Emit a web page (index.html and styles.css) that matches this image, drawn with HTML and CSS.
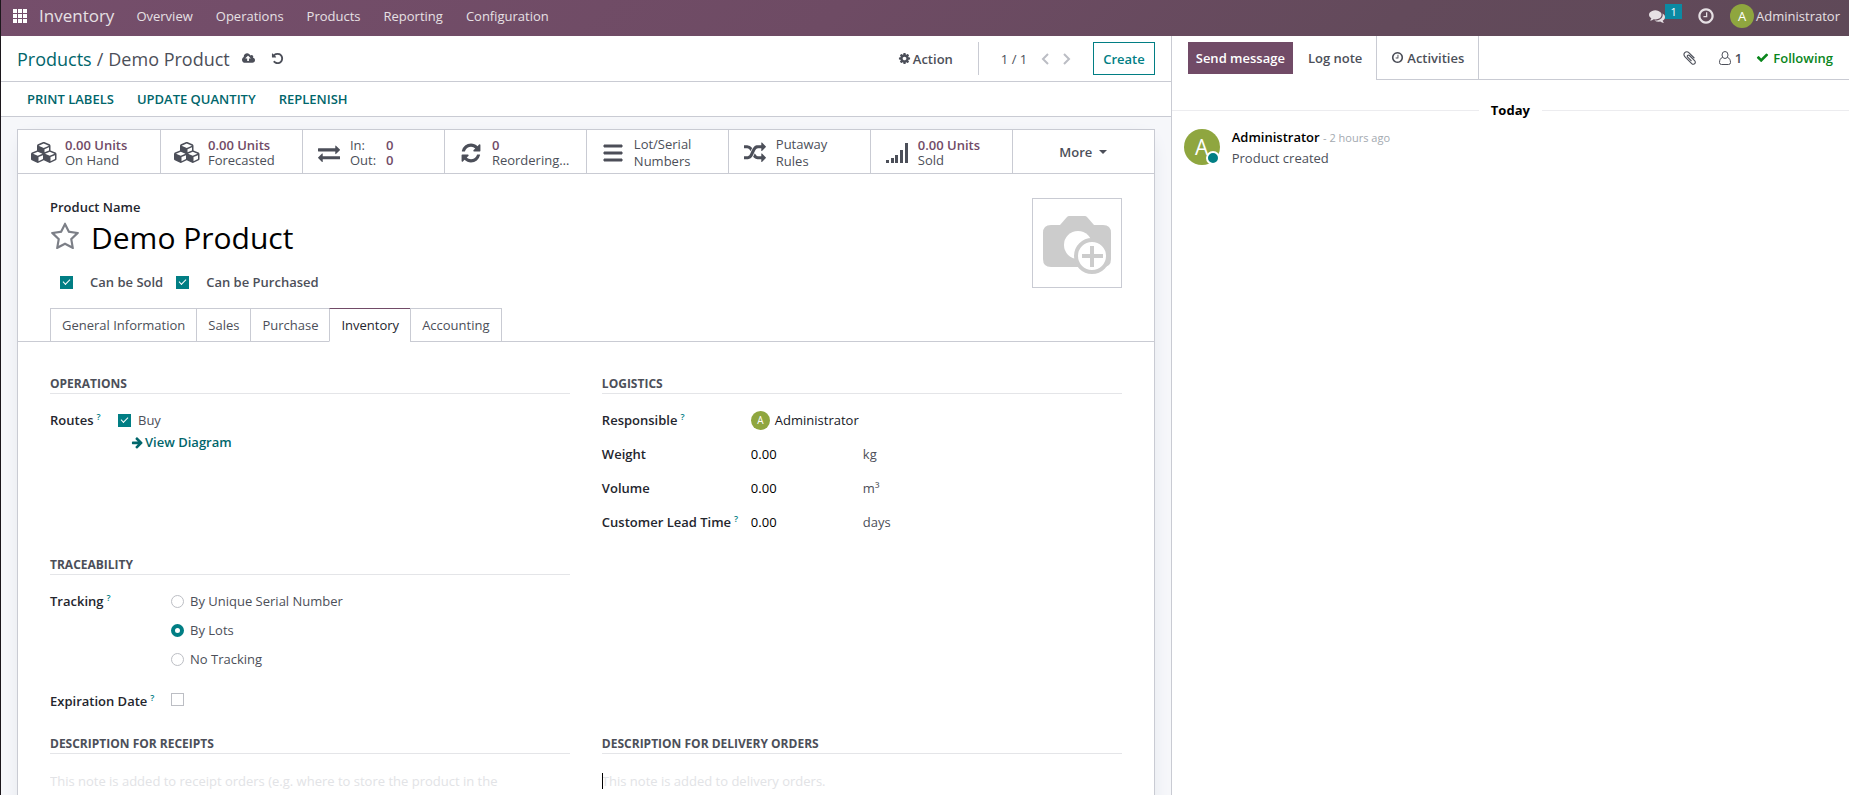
FILE: index.html
```html
<!DOCTYPE html>
<html lang="en">
<head>
<meta charset="utf-8">
<title>Inventory - Demo Product</title>
<link rel="stylesheet" href="styles.css">
</head>
<body>
<svg class="sprite" aria-hidden="true">
  <symbol id="i-cubes" viewBox="0 0 2304 1792"><path d="M640 1632l384-192v-314l-384 164v342zm-64-454l404-173-404-173-404 173zm1088 454l384-192v-314l-384 164v342zm-64-454l404-173-404-173-404 173zm-448-293l384-165v-266l-384 164v267zm-64-379l441-189-441-189-441 189zm1088 518v416q0 36-19 67t-52 47l-448 224q-25 14-57 14t-57-14l-448-224q-4-2-7-4-2 2-7 4l-448 224q-25 14-57 14t-57-14l-448-224q-33-16-52-47t-19-67v-416q0-38 21.500-70t56.500-48l434-186v-400q0-38 21.500-70t56.500-48l448-192q23-10 50-10t50 10l448 192q35 16 56.500 48t21.500 70v400l434 186q36 16 57 48t21 70z"/></symbol>
  <symbol id="i-clock" viewBox="0 0 1792 1792"><path d="M1024 544v448q0 14-9 23t-23 9h-320q-14 0-23-9t-9-23v-64q0-14 9-23t23-9h224v-352q0-14 9-23t23-9h64q14 0 23 9t9 23zm416 352q0-148-73-273t-198-198-273-73-273 73-198 198-73 273 73 273 198 198 273 73 273-73 198-198 73-273zm224 0q0 209-103 385.500t-279.500 279.500-385.500 103-385.500-103-279.500-279.500-103-385.500 103-385.500 279.500-279.500 385.500-103 385.500 103 279.500 279.500 103 385.500z"/></symbol>
</svg>

<header class="navbar">
  <button class="icon-btn apps" aria-label="Apps">
    <svg width="14" height="14" viewBox="0 0 14 14"><path d="M0 0h4v4H0zM5 0h4v4H5zM10 0h4v4h-4zM0 5h4v4H0zM5 5h4v4H5zM10 5h4v4h-4zM0 10h4v4H0zM5 10h4v4H5zM10 10h4v4h-4z"/></svg>
  </button>
  <a class="brand" href="#">Inventory</a>
  <nav class="menu">
    <a href="#">Overview</a>
    <a href="#">Operations</a>
    <a href="#">Products</a>
    <a href="#">Reporting</a>
    <a href="#">Configuration</a>
  </nav>
  <div class="systray">
    <button class="icon-btn chat" aria-label="Messages">
      <svg width="16" height="16" viewBox="0 0 1792 1792"><path d="M1408 768q0 139-94 257t-256.500 186.500-353.500 68.500q-86 0-176-16-124 88-278 128-36 9-86 16h-3q-11 0-20.500-8t-11.500-21q-1-3-1-6.500t.5-6.500 2-6l2.500-5 3.500-5.500 4-5 4.500-5 4-4.500q5-6 23-25t26-29.500 22.500-29 25-38.500 20.500-44q-124-72-195-177t-71-224q0-139 94-257t256.500-186.500 353.500-68.500 353.500 68.500 256.500 186.500 94 257zm384 256q0 120-71 224.500t-195 176.500q10 24 20.500 44t25 38.500 22.500 29 26 29.500 23 25q1 1 4 4.500t4.500 5 4 5 3.500 5.500l2.500 5 2 6 .5 6.500-1 6.500q-3 14-13 22t-22 7q-50-7-86-16-154-40-278-128-90 16-176 16-271 0-472-132 58 4 88 4 161 0 309-45t264-129q125-92 192-212t67-254q0-77-23-152 129 71 204 178t75 230z"/></svg>
      <span class="badge">1</span>
    </button>
    <button class="icon-btn" aria-label="Activities"><svg width="18" height="18"><use href="#i-clock"/></svg></button>
    <button class="user"><span class="avatar avatar-md">A</span>Administrator</button>
  </div>
</header>

<main class="content">
  <section class="form-side">
    <div class="control-panel">
      <div class="breadcrumb"><a href="#">Products</a><span class="sep">/</span><span>Demo Product</span></div>
      <button class="icon-btn save" aria-label="Save">
        <svg width="13" height="13" viewBox="0 0 1920 1792"><path d="M1280 864q0-14-9-23l-352-352q-9-9-23-9t-23 9l-351 351q-10 12-10 24 0 14 9 23t23 9h224v352q0 13 9.500 22.500t22.500 9.500h192q13 0 22.500-9.500t9.500-22.500v-352h224q13 0 22.500-9.500t9.500-22.500zm640 288q0 159-112.500 271.500t-271.500 112.500h-1088q-185 0-316.500-131.500t-131.500-316.500q0-130 70-240t188-165q-2-30-2-43 0-212 150-362t362-150q156 0 285.500 87t188.500 231q71-62 166-62 106 0 181 75t75 181q0 76-41 138 130 31 213.500 135.500t83.500 238.500z"/></svg>
      </button>
      <button class="icon-btn" aria-label="Discard">
        <svg width="13" height="13" viewBox="0 0 1792 1792"><path d="M1664 896q0 156-61 298t-164 245-245 164-298 61q-172 0-327-72.500t-264-204.500q-7-10-6.500-22.500t8.500-20.500l137-138q10-9 25-9 16 2 23 12 73 95 179 147t225 52q104 0 198.500-40.500t163.500-109.500 109.500-163.500 40.500-198.500-40.500-198.500-109.500-163.500-163.500-109.500-198.500-40.500q-98 0-188 35.500t-160 101.500l137 138q31 30 14 69-17 40-59 40h-448q-26 0-45-19t-19-45v-448q0-42 40-59 39-17 69 14l130 129q107-101 244.500-156.500t284.500-55.500q156 0 298 61t245 164 164 245 61 298z"/></svg>
      </button>
      <button class="action">
        <svg width="13" height="13" viewBox="0 0 1792 1792"><path d="M1152 896q0-106-75-181t-181-75-181 75-75 181 75 181 181 75 181-75 75-181zm512-109v222q0 12-8 23t-20 13l-185 28q-19 54-39 91 35 50 107 138 10 12 10 25t-9 23q-27 37-99 108t-94 71q-12 0-26-9l-138-108q-44 23-91 38-16 136-29 186-7 28-36 28h-222q-14 0-24.500-8.500t-11.500-21.500l-28-184q-49-16-90-37l-141 107q-10 9-25 9-14 0-25-11-126-114-165-168-7-10-7-23 0-12 8-23 15-21 51-66.500t54-70.500q-27-50-41-99l-183-27q-13-2-21-12.500t-8-23.500v-222q0-12 8-23t19-13l186-28q14-46 39-92-40-57-107-138-10-12-10-24 0-10 9-23 26-36 98.500-107.500t94.500-71.500q13 0 26 10l138 107q44-23 91-38 16-136 29-186 7-28 36-28h222q14 0 24.500 8.500t11.500 21.500l28 184q49 16 90 37l142-107q9-9 24-9 13 0 25 10 129 119 165 170 7 8 7 22 0 12-8 23-15 21-51 66.500t-54 70.500q26 50 41 98l183 28q13 2 21 12.500t8 23.500z"/></svg>Action
      </button>
      <div class="pager">
        <span>1 / 1</span>
        <button class="icon-btn" aria-label="Previous"><svg width="8" height="12" viewBox="0 0 8 12"><path class="chev" d="M7 1L2 6l5 5"/></svg></button>
        <button class="icon-btn" aria-label="Next"><svg width="8" height="12" viewBox="0 0 8 12"><path class="chev" d="M1 1l5 5-5 5"/></svg></button>
      </div>
      <button class="create">Create</button>
    </div>

    <div class="statusbar">
      <button>PRINT LABELS</button>
      <button>UPDATE QUANTITY</button>
      <button>REPLENISH</button>
    </div>

    <div class="sheet-area">
      <div class="sheet">
        <div class="stats">
          <button class="stat"><span class="stat-icon"><svg width="27" height="21"><use href="#i-cubes"/></svg></span><span class="stat-text"><b>0.00 Units</b><span>On Hand</span></span></button>
          <button class="stat"><span class="stat-icon"><svg width="27" height="21"><use href="#i-cubes"/></svg></span><span class="stat-text"><b>0.00 Units</b><span>Forecasted</span></span></button>
          <button class="stat"><span class="stat-icon"><svg width="22" height="22" viewBox="0 0 1792 1792"><path d="M1792 1184v192q0 13-9.500 22.500t-22.500 9.500h-1376v192q0 13-9.500 22.500t-22.500 9.500q-12 0-24-10l-319-320q-9-9-9-22 0-14 9-23l320-320q9-9 23-9 13 0 22.500 9.500t9.500 22.500v192h1376q13 0 22.500 9.500t9.500 22.500zm0-544q0 14-9 23l-320 320q-9 9-23 9-13 0-22.500-9.500t-9.500-22.500v-192h-1376q-13 0-22.500-9.500t-9.500-22.500v-192q0-13 9.500-22.500t22.500-9.500h1376v-192q0-14 9-23t23-9q12 0 24 10l319 319q9 9 9 23z"/></svg></span><span class="stat-text in-out"><span>In:</span><b>0</b><span>Out:</span><b>0</b></span></button>
          <button class="stat"><span class="stat-icon"><svg width="22" height="22" viewBox="0 0 1792 1792"><path d="M1639 1056q0 5-1 7-64 268-268 434.500t-478 166.500q-146 0-282.500-55t-243.500-157l-129 129q-19 19-45 19t-45-19-19-45v-448q0-26 19-45t45-19h448q26 0 45 19t19 45-19 45l-137 137q71 66 161 102t187 36q134 0 250-65t186-179q11-17 53-117 8-23 30-23h192q13 0 22.500 9.500t9.500 22.500zm25-800v448q0 26-19 45t-45 19h-448q-26 0-45-19t-19-45 19-45l138-138q-148-137-349-137-134 0-250 65t-186 179q-11 17-53 117-8 23-30 23h-199q-13 0-22.500-9.500t-9.500-22.500v-7q65-268 270-434.500t480-166.500q146 0 284 55.500t245 156.500l130-129q19-19 45-19t45 19 19 45z"/></svg></span><span class="stat-text"><b>0</b><span>Reordering…</span></span></button>
          <button class="stat"><span class="stat-icon"><svg width="20" height="18" viewBox="0 0 20 18"><path d="M1 1h18v2H1zM1 8h18v2H1zM1 15h18v2H1z" stroke="currentColor" stroke-width="1" stroke-linejoin="round"/></svg></span><span class="stat-text loose"><span>Lot/Serial</span><span>Numbers</span></span></button>
          <button class="stat"><span class="stat-icon"><svg width="22" height="22" viewBox="0 0 1792 1792"><path d="M666 481q-60 92-137 273-22-45-37-72.500t-40.500-63.500-51-56.500-63-35-81.500-14.500h-224q-14 0-23-9t-9-23v-192q0-14 9-23t23-9h224q250 0 410 225zm1126 799q0 14-9 23l-320 320q-9 9-23 9-13 0-22.500-9.500t-9.500-22.500v-192q-32 0-85 .5t-81 1-73-1-71-5-64-10.500-63-18.500-58-28.500-59-40-55-53.500-56-69.500q59-93 136-273 22 45 37 72.500t40.500 63.500 51 56.500 63 35 81.500 14.500h256v-192q0-14 9-23t23-9q12 0 24 10l319 319q9 9 9 23zm0-896q0 14-9 23l-320 320q-9 9-23 9-13 0-22.500-9.500t-9.500-22.500v-192h-256q-48 0-87 15t-69 45-51 61.500-45 77.500q-32 62-78 171-29 66-49.500 111t-54 105-64 100-74 83-90 68.500-106.500 42-128 16.500h-224q-14 0-23-9t-9-23v-192q0-14 9-23t23-9h224q48 0 87-15t69-45 51-61.500 45-77.500q32-62 78-171 29-66 49.500-111t54-105 64-100 74-83 90-68.500 106.500-42 128-16.500h256v-192q0-14 9-23t23-9q12 0 24 10l319 319q9 9 9 23z"/></svg></span><span class="stat-text loose"><span>Putaway</span><span>Rules</span></span></button>
          <button class="stat"><span class="stat-icon"><svg width="22" height="20" viewBox="0 0 22 20"><path d="M0 17h3v3H0zM5 15h3v5H5zM9 12h3v8H9zM14 7h3v13h-3zM19 0h3v20h-3z"/></svg></span><span class="stat-text"><b>0.00 Units</b><span>Sold</span></span></button>
          <button class="stat more">More<svg width="8" height="4" viewBox="0 0 8 4"><path d="M0 0h8L4 4z"/></svg></button>
        </div>

        <div class="title-row">
          <div class="title">
            <label class="field-label" for="name">Product Name</label>
            <div class="name-row">
              <button class="icon-btn star" aria-label="Favorite"><svg width="30" height="30" viewBox="0 0 1792 1792"><path d="M1201 1004l306-297-422-62-189-382-189 382-422 62 306 297-73 421 378-199 377 199zm527-357q0 22-26 48l-363 354 86 500q1 7 1 20 0 50-41 50-19 0-40-12l-449-236-449 236q-22 12-40 12-21 0-31.500-14.500t-10.500-35.500q0-6 2-20l86-500-364-354q-25-27-25-48 0-37 56-46l502-73 225-455q19-41 49-41t49 41l225 455 502 73q56 9 56 46z"/></svg></button>
              <input id="name" class="name" type="text" value="Demo Product">
            </div>
            <div class="flags">
              <label><input class="check" type="checkbox" checked>Can be Sold</label>
              <label><input class="check" type="checkbox" checked>Can be Purchased</label>
            </div>
          </div>
          <div class="photo">
            <svg viewBox="0 0 88 88" role="img" aria-label="Product image"><path fill="#ccc" d="M18 26h9l7-8q1-1 2-1h16q1 0 2 1l7 8h9q8 0 8 8v26q0 8-8 8H18q-8 0-8-8V34q0-8 8-8z"/><circle cx="45" cy="46" r="14" fill="#fff"/><circle cx="59" cy="57" r="16" fill="#fff" stroke="#ccc" stroke-width="4"/><path d="M59 47v21M49 57h21" stroke="#ccc" stroke-width="4"/></svg>
          </div>
        </div>

        <nav class="tabs">
          <a href="#">General Information</a>
          <a href="#">Sales</a>
          <a href="#">Purchase</a>
          <a href="#" class="active">Inventory</a>
          <a href="#">Accounting</a>
        </nav>

        <div class="groups">
          <section class="group top">
            <h2>OPERATIONS</h2>
            <div class="row routes">
              <span class="field-label">Routes<sup>?</sup></span>
              <div>
                <label class="route"><input class="check" type="checkbox" checked>Buy</label>
                <a class="diagram" href="#"><svg width="12" height="13" viewBox="0 0 1664 1792"><path d="M1600 960q0 54-37 91l-651 651q-39 37-91 37-51 0-90-37l-75-75q-38-38-38-91t38-91l293-293h-704q-52 0-84.500-37.500t-32.500-90.500v-128q0-53 32.500-90.500t84.500-37.500h704l-293-294q-38-36-38-90t38-90l75-75q38-38 90-38 53 0 91 38l651 651q37 35 37 90z"/></svg>View Diagram</a>
              </div>
            </div>
          </section>
          <section class="group top">
            <h2>LOGISTICS</h2>
            <div class="row wide"><span class="field-label">Responsible<sup>?</sup></span><span class="responsible"><span class="avatar avatar-sm">A</span>Administrator</span></div>
            <div class="row wide"><label class="field-label" for="weight">Weight</label><input id="weight" class="num" value="0.00"><span class="unit">kg</span></div>
            <div class="row wide"><label class="field-label" for="volume">Volume</label><input id="volume" class="num" value="0.00"><span class="unit">m³</span></div>
            <div class="row wide"><label class="field-label" for="lead">Customer Lead Time<sup>?</sup></label><input id="lead" class="num" value="0.00"><span class="unit">days</span></div>
          </section>
          <section class="group trace">
            <h2>TRACEABILITY</h2>
            <div class="row tracking">
              <span class="field-label">Tracking<sup>?</sup></span>
              <div class="radios">
                <label><input class="radio" type="radio" name="tracking">By Unique Serial Number</label>
                <label><input class="radio" type="radio" name="tracking" checked>By Lots</label>
                <label><input class="radio" type="radio" name="tracking">No Tracking</label>
              </div>
            </div>
            <div class="row"><label class="field-label" for="exp">Expiration Date<sup>?</sup></label><input id="exp" class="check" type="checkbox"></div>
          </section>
          <section class="group notes">
            <h2><label for="receipts">DESCRIPTION FOR RECEIPTS</label></h2>
            <textarea id="receipts" rows="1" placeholder="This note is added to receipt orders (e.g. where to store the product in the"></textarea>
          </section>
          <section class="group notes focused">
            <h2><label for="delivery">DESCRIPTION FOR DELIVERY ORDERS</label></h2>
            <textarea id="delivery" rows="1" placeholder="This note is added to delivery orders."></textarea>
          </section>
        </div>
      </div>
    </div>
  </section>

  <aside class="chatter">
    <div class="chatter-bar">
      <div class="compose">
        <button class="send">Send message</button>
        <button class="log">Log note</button>
      </div>
      <button class="activities"><svg width="13" height="13"><use href="#i-clock"/></svg>Activities</button>
      <div class="chatter-right">
        <button class="icon-btn clip" aria-label="Attachments"><svg width="16" height="16" viewBox="0 0 1792 1792"><path transform="translate(70 0)" d="M1596 1385q0 117-79 196t-196 79q-135 0-235-100l-777-776q-113-115-113-271 0-159 110-270t269-111q158 0 273 113l605 606q10 10 10 22 0 16-30.500 46.500t-46.500 30.500q-13 0-23-10l-606-607q-79-77-181-77-106 0-179 75t-73 181q0 105 76 181l776 777q63 63 145 63 64 0 106-42t42-106q0-82-63-145l-581-581q-26-24-60-24-29 0-48 19t-19 48q0 32 25 59l410 410q10 10 10 22 0 16-31 47t-47 31q-12 0-22-10l-410-410q-63-61-63-149 0-82 57-139t139-57q88 0 149 63l581 581q100 98 100 235z"/></svg></button>
        <button class="followers"><svg width="12" height="14" viewBox="0 0 12 14"><g fill="none" stroke="currentColor"><ellipse cx="6" cy="4" rx="3" ry="3.500"/><path d="M3.500 6.500C1.500 7 .5 9 .5 11.500q0 2 2 2h7q2 0 2-2C11.500 9 10.500 7 8.500 6.500"/></g></svg>1</button>
        <button class="following"><svg width="13" height="13" viewBox="0 0 1792 1792"><path d="M1671 566q0 40-28 68l-724 724-136 136q-28 28-68 28t-68-28l-136-136-362-362q-28-28-28-68t28-68l136-136q28-28 68-28t68 28l294 295 656-657q28-28 68-28t68 28l136 136q28 28 28 68z"/></svg>Following</button>
      </div>
    </div>
    <div class="day">Today</div>
    <article class="message">
      <span class="avatar avatar-lg">A<i class="presence"></i></span>
      <div>
        <div class="author"><b>Administrator</b> <time>- 2 hours ago</time></div>
        <p>Product created</p>
      </div>
    </article>
  </aside>
</main>
</body>
</html>
```

FILE: styles.css
```css
* { box-sizing: border-box; }

:root {
  --teal: #017e84;
  --link: #01666b;
  --plum: #714b67;
  --text: #4c4f59;
  --dark: #24262e;
  --line: #c9cbd3;
  --soft: #e4e5e8;
  --green: #8fa63f;
  --medium: 600;
}

body {
  display: flex;
  flex-direction: column;
  height: 100vh;
  margin: 0;
  overflow: hidden;
  border-left: 1px solid #1c171c;
  background: #fff;
  color: var(--text);
  font: 13px/16px "Open Sans", "Noto Sans", sans-serif;
}

button, input, textarea {
  margin: 0;
  padding: 0;
  border: 0;
  background: none;
  color: inherit;
  font: inherit;
}

a { color: inherit; text-decoration: none; }
svg { display: block; flex: none; fill: currentColor; }
.sprite { position: absolute; width: 0; height: 0; }
.icon-btn { display: flex; align-items: center; }
.chev { fill: none; stroke: #bbbdc4; stroke-width: 2; }

.avatar {
  display: flex;
  flex: none;
  align-items: center;
  justify-content: center;
  border-radius: 50%;
  background: var(--green);
  color: #fff;
}
.avatar-sm { width: 19px; height: 19px; font-size: 10px; }
.avatar-md { width: 24px; height: 24px; font-size: 13px; }
.avatar-lg { position: relative; width: 36px; height: 36px; font-size: 21px; }

/* Top bar */
.navbar {
  display: flex;
  flex: none;
  align-items: center;
  height: 36px;
  padding: 0 9px 4px 12px;
  background: linear-gradient(135deg, #754e6b 0%, #6e4b64 45%, #634a5b 75%, #5f4958 100%);
  color: #e6e0e4;
}
.apps { color: #fff; }
.brand { margin-left: 12px; font-size: 17px; line-height: 24px; }
.menu { display: flex; gap: 23px; margin-left: 22px; }
.systray { display: flex; align-items: center; gap: 15px; margin-left: auto; }
.badge {
  align-self: flex-start;
  width: 17px;
  background: #0b8aa3;
  color: #fff;
  font-size: 11px;
  line-height: 15px;
}
.chat { height: 24px; }
.user { display: flex; align-items: center; gap: 2px; }

.content { display: flex; flex: 1; min-height: 0; }
.form-side { display: flex; flex: 1171 1 0; flex-direction: column; min-width: 0; }
.chatter { flex: 678 1 0; min-width: 0; border-left: 1px solid var(--line); }

/* Control panel */
.control-panel {
  display: flex;
  flex: none;
  align-items: center;
  height: 46px;
  padding: 0 16px;
  border-bottom: 1px solid var(--line);
}
.breadcrumb { display: flex; gap: 5px; font-size: 18px; line-height: 24px; }
.breadcrumb a { color: var(--link); }
.save { margin: 0 16px 0 12px; }
.action {
  display: flex;
  align-items: center;
  gap: 2px;
  margin-left: auto;
  font-weight: var(--medium);
}
.pager {
  display: flex;
  align-items: center;
  gap: 14px;
  height: 33px;
  margin: 0 22px 0 25px;
  padding-left: 22px;
  border-left: 1px solid var(--line);
}
.create {
  height: 33px;
  padding: 0 9px;
  border: 1px solid var(--teal);
  color: var(--teal);
  font-weight: 600;
}

.statusbar {
  display: flex;
  flex: none;
  gap: 23px;
  height: 35px;
  padding: 0 26px;
  border-bottom: 1px solid var(--line);
  color: var(--link);
}
.statusbar button { font-weight: 600; }

/* Sheet */
.sheet-area { flex: 1; min-height: 0; padding: 12px 16px 0; overflow: hidden; background: #f6f7fa; }
.sheet {
  border: 1px solid var(--line);
  background: #fff;
  box-shadow: 0 5px 20px -10px #c3c8d6;
}
.stats {
  display: grid;
  grid-template-columns: repeat(8, 1fr);
  height: 44px;
  border-bottom: 1px solid var(--line);
}
.stat { display: flex; align-items: center; min-width: 0; padding: 2px 6px 0; text-align: left; }
.stat + .stat { border-left: 1px solid var(--line); }
.stat-icon { display: flex; flex: none; justify-content: center; width: 41px; }
.stat-text { display: flex; flex-direction: column; line-height: 15px; white-space: nowrap; }
.stat b { color: var(--plum); font-weight: var(--medium); }
.stat-text.loose { line-height: 17px; }
.stat-text.in-out { display: grid; grid-template-columns: 36px auto; }
.stat.more { justify-content: center; gap: 7px; padding-top: 0; font-weight: var(--medium); }

.title-row { display: flex; justify-content: space-between; padding: 24px 32px 0; }
.title { display: flex; flex: 1; flex-direction: column; min-width: 0; padding-top: 1px; }
.field-label { color: var(--dark); font-weight: var(--medium); white-space: nowrap; }
.field-label sup {
  margin-left: 3px;
  color: var(--teal);
  font-size: 9px;
  line-height: 0;
}
.name-row { display: flex; align-items: center; gap: 11px; height: 44px; }
.star { color: #7c7f87; }
.name { flex: 1; min-width: 0; height: 42px; color: #000; font-size: 30px; }
.flags { display: flex; gap: 13px; margin-top: 15px; padding-left: 10px; font-weight: var(--medium); }
.flags label { display: flex; align-items: center; gap: 17px; }

.photo { width: 90px; height: 90px; border: 1px solid var(--line); }

.check, .radio {
  flex: none;
  width: 13px;
  height: 13px;
  appearance: none;
  border: 1px solid #bcbec4;
  background: #fff;
}
.radio { border-radius: 50%; }
.radio:checked { border: 4px solid var(--teal); }
.check:checked { display: grid; place-items: center; border-color: var(--teal); background: var(--teal); }
.check:checked::before {
  content: "";
  width: 6px;
  height: 3px;
  border: solid #fff;
  border-width: 0 0 1px 1px;
  transform: translateY(-1px) rotate(-45deg);
}

.tabs {
  display: flex;
  margin-top: 18px;
  padding: 0 32px;
  border-bottom: 1px solid var(--line);
}
.tabs a {
  margin: 0 0 -1px -1px;
  padding: 8px 11px;
  border: 1px solid var(--line);
}
.tabs a:first-child { margin-left: 0; }
.tabs .active { border-top-color: var(--plum); border-bottom-color: #fff; color: var(--dark); }

.groups {
  display: grid;
  grid-template-columns: 1fr 1fr;
  column-gap: 32px;
  padding: 34px 32px 24px;
}
.group h2 {
  margin: 0 0 12px;
  padding-bottom: 1px;
  border-bottom: 1px solid var(--soft);
  color: var(--text);
  font-size: 12px;
  font-weight: 700;
  line-height: 16px;
}
.group.top { min-height: 181px; }
.row { display: grid; grid-template-columns: 121px auto 1fr; align-items: start; min-height: 34px; padding-top: 6px; }
.row.routes { grid-template-columns: 68px 1fr; }
.row.wide { grid-template-columns: 149px 112px 1fr; }
.route { display: flex; align-items: center; gap: 7px; }
.diagram {
  display: flex;
  align-items: center;
  gap: 2px;
  margin-top: 6px;
  padding-left: 13px;
  color: var(--link);
  font-weight: var(--medium);
}
.responsible { display: flex; align-items: center; gap: 5px; height: 16px; color: #16181f; }
.num { width: 100px; color: #000; }

.trace { grid-column: 1 / 3; width: calc(50% - 16px); min-height: 179px; }
.tracking { min-height: 100px; }
.radios { display: flex; flex-direction: column; gap: 13px; }
.radios label { display: flex; align-items: center; gap: 6px; }

.notes { position: relative; }
.notes h2 { margin-bottom: 17px; }
.notes textarea { display: block; width: 100%; height: 60px; overflow: hidden; resize: none; line-height: 20px; }
.notes textarea::placeholder { color: #e2e3e6; opacity: 1; }
.focused::after {
  content: "";
  position: absolute;
  top: 37px;
  left: 0;
  width: 1px;
  height: 16px;
  background: #000;
}

/* Chatter */
.chatter-bar { display: flex; height: 44px; }
.compose {
  display: flex;
  align-items: center;
  gap: 15px;
  padding: 0 14px 0 16px;
  border-right: 1px solid var(--line);
}
.compose button { font-weight: var(--medium); }
.send { height: 32px; padding: 0 8px; background: var(--plum); color: #fff; }
.activities {
  display: flex;
  align-items: center;
  gap: 3px;
  padding: 0 14px;
  border-right: 1px solid var(--line);
  border-bottom: 1px solid var(--line);
  font-weight: var(--medium);
}
.chatter-right {
  display: flex;
  flex: 1;
  align-items: center;
  justify-content: flex-end;
  padding-right: 16px;
  border-bottom: 1px solid var(--line);
}
.followers { display: flex; align-items: center; gap: 4px; margin: 0 14px 0 22px; font-weight: var(--medium); }
.following { display: flex; align-items: center; gap: 4px; color: #0a861c; font-weight: 600; }

.day {
  display: flex;
  align-items: center;
  gap: 12px;
  margin-top: 22px;
  color: #000;
  font-weight: 700;
}
.day::before, .day::after { content: ""; flex: 1; height: 1px; background: #ececef; }
.message { display: flex; gap: 12px; padding: 11px 12px; }
.author b { color: #000; font-weight: 600; }
.author time { color: #a3a9b0; font-size: 11px; }
.message p { margin: 4px 0 0; }
.presence {
  position: absolute;
  right: 0;
  bottom: 0;
  width: 14px;
  height: 14px;
  border: 2px solid #fff;
  border-radius: 50%;
  background: var(--teal);
}
```
